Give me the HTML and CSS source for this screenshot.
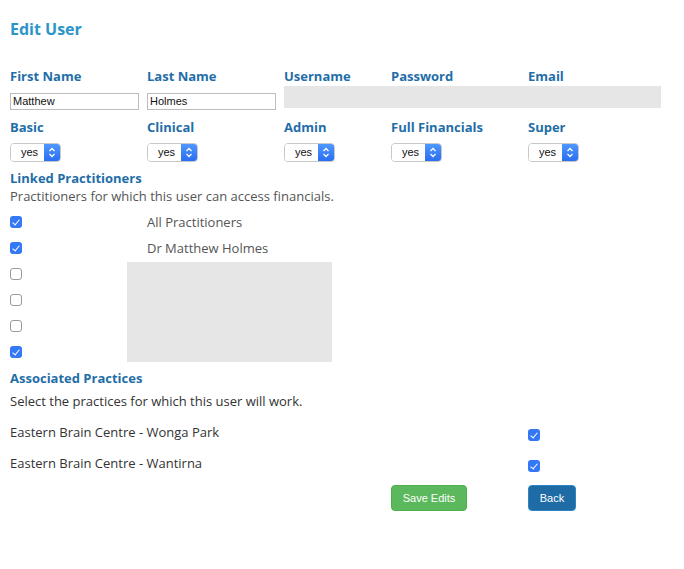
FILE: index.html
```html
<!DOCTYPE html>
<html lang="en">
<head>
  <meta charset="UTF-8">
  <title>Edit User</title>
  <link rel="stylesheet" href="styles.css">
</head>
<body>
  <div class="page">
    <h1>Edit User</h1>

    <!-- Names and login -->
    <div class="fields">
      <label class="field-label">First Name</label>
      <label class="field-label">Last Name</label>
      <label class="field-label">Username</label>
      <label class="field-label">Password</label>
      <label class="field-label">Email</label>

      <div class="field"><input type="text" value="Matthew"></div>
      <div class="field"><input type="text" value="Holmes"></div>
      <div class="field hidden-block"></div>

      <label class="field-label">Basic</label>
      <label class="field-label">Clinical</label>
      <label class="field-label">Admin</label>
      <label class="field-label">Full Financials</label>
      <label class="field-label">Super</label>

      <div class="field"><span class="select"><select><option>yes</option><option>no</option></select><span class="select-arrow"><svg width="8" height="11" viewBox="0 0 8 11"><path d="M1.5 4 L4 1.5 L6.5 4 M1.5 7 L4 9.5 L6.5 7" fill="none" stroke="#fff" stroke-width="1.3"/></svg></span></span></div>
      <div class="field"><span class="select"><select><option>yes</option><option>no</option></select><span class="select-arrow"><svg width="8" height="11" viewBox="0 0 8 11"><path d="M1.5 4 L4 1.5 L6.5 4 M1.5 7 L4 9.5 L6.5 7" fill="none" stroke="#fff" stroke-width="1.3"/></svg></span></span></div>
      <div class="field"><span class="select"><select><option>yes</option><option>no</option></select><span class="select-arrow"><svg width="8" height="11" viewBox="0 0 8 11"><path d="M1.5 4 L4 1.5 L6.5 4 M1.5 7 L4 9.5 L6.5 7" fill="none" stroke="#fff" stroke-width="1.3"/></svg></span></span></div>
      <div class="field"><span class="select"><select><option>yes</option><option>no</option></select><span class="select-arrow"><svg width="8" height="11" viewBox="0 0 8 11"><path d="M1.5 4 L4 1.5 L6.5 4 M1.5 7 L4 9.5 L6.5 7" fill="none" stroke="#fff" stroke-width="1.3"/></svg></span></span></div>
      <div class="field"><span class="select"><select><option>yes</option><option>no</option></select><span class="select-arrow"><svg width="8" height="11" viewBox="0 0 8 11"><path d="M1.5 4 L4 1.5 L6.5 4 M1.5 7 L4 9.5 L6.5 7" fill="none" stroke="#fff" stroke-width="1.3"/></svg></span></span></div>
    </div>

    <!-- Linked Practitioners -->
    <h2>Linked Practitioners</h2>
    <p class="note">Practitioners for which this user can access financials.</p>
    <div class="linked">
      <span class="check on"></span><span class="name">All Practitioners</span>
      <span class="check on"></span><span class="name">Dr Matthew Holmes</span>
      <span class="check"></span><span class="hidden-names"></span>
      <span class="check"></span>
      <span class="check"></span>
      <span class="check on"></span>
    </div>

    <!-- Associated Practices -->
    <h2 class="practices-title">Associated Practices</h2>
    <p class="lead">Select the practices for which this user will work.</p>
    <div class="practices">
      <span class="practice">Eastern Brain Centre - Wonga Park</span><span class="check on"></span>
      <span class="practice">Eastern Brain Centre - Wantirna</span><span class="check on"></span>
    </div>

    <div class="actions">
      <button class="btn btn-save">Save Edits</button>
      <button class="btn btn-back">Back</button>
    </div>
  </div>
</body>
</html>
```

FILE: styles.css
```css
body {
  margin: 0;
  font-family: "Open Sans", sans-serif;
  font-size: 13px;
  color: #555;
  background: #fff;
}
.page {
  padding: 18px 10px 40px;
}
h1 {
  margin: 0 0 27px;
  font-size: 16px;
  font-weight: 700;
  color: #2b95c8;
  line-height: 22px;
}
h2 {
  margin: 0;
  font-size: 13px;
  font-weight: 700;
  color: #1f6ea8;
  line-height: 18px;
}

/* field grid */
.fields {
  display: grid;
  grid-template-columns: 137px 137px 107px 137px 133px;
}
.field-label {
  font-weight: 700;
  color: #1f6ea8;
  line-height: 18px;
  padding-bottom: 6px;
}
.field {
  height: 17px;
  margin-bottom: 10px;
}
.field input {
  box-sizing: border-box;
  width: 129px;
  height: 17px;
  margin: 0;
  padding: 0 2px;
  border: 1px solid #bdbdbd;
  font-family: "Liberation Sans", Arial, sans-serif;
  font-size: 11px;
  color: #111;
}
.hidden-block {
  grid-column: 3 / span 3;
  height: 22px;
  margin-top: -5px;
  margin-bottom: 5px;
  background: #e6e6e6;
}
.field:nth-last-child(-n+5) {
  height: 19px;
  margin-bottom: 8px;
}
.select {
  display: inline-flex;
  height: 19px;
  border: 1px solid #c8c8c8;
  border-radius: 4px;
  box-sizing: border-box;
  overflow: hidden;
}
.select select {
  appearance: none;
  -webkit-appearance: none;
  border: 0;
  margin: 0;
  width: 33px;
  padding: 0 0 0 10px;
  background: #fff;
  font-family: "Liberation Sans", Arial, sans-serif;
  font-size: 11px;
  color: #111;
}
.select-arrow {
  width: 16px;
  display: flex;
  align-items: center;
  justify-content: center;
  background: linear-gradient(#4f97ff, #2a6ef0);
}

/* practitioners */
.note {
  margin: 0 0 4px;
  line-height: 18px;
}
.linked {
  display: grid;
  grid-template-columns: 117px 205px;
  grid-auto-rows: 26px;
  align-items: center;
}
.name {
  padding-left: 20px;
  line-height: 18px;
}
.hidden-names {
  grid-column: 2;
  grid-row: 3 / span 4;
  align-self: stretch;
  margin: 1px 0 3px;
  background: #e6e6e6;
}
.check {
  box-sizing: border-box;
  width: 12px;
  height: 12px;
  border: 1px solid #9a9a9a;
  border-radius: 3px;
  background: #fff;
}
.check.on {
  border: 0;
  background: #3478f6;
  position: relative;
}
.check.on::after {
  content: "";
  position: absolute;
  left: 4px;
  top: 2px;
  width: 3px;
  height: 6px;
  border: solid #fff;
  border-width: 0 1.5px 1.5px 0;
  transform: rotate(40deg);
}

/* practices */
.practices-title {
  margin-top: 4px;
}
.lead {
  margin: 5px 0 13px;
  color: #333;
  line-height: 18px;
}
.practices {
  display: grid;
  grid-template-columns: 518px 12px;
  grid-auto-rows: 31px;
  color: #333;
}
.practices .check {
  margin-top: 6px;
}
.actions {
  display: grid;
  grid-template-columns: 381px 137px auto;
  margin-top: 0;
}
.btn {
  height: 26px;
  border-radius: 4px;
  font-family: "Liberation Sans", Arial, sans-serif;
  font-size: 11px;
  color: #fff;
  cursor: pointer;
}
.btn-save {
  grid-column: 2;
  width: 76px;
  background: #5cb85c;
  border: 1px solid #4cae4c;
}
.btn-back {
  grid-column: 3;
  width: 48px;
  background: #1f6ba6;
  border: 1px solid #2e85c5;
}
```
